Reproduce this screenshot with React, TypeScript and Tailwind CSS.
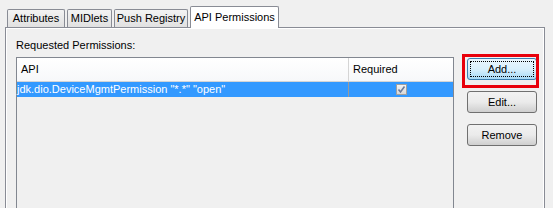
import React from 'react';

const font = { fontFamily: '"Liberation Sans", Arial, sans-serif' };

const Tab: React.FC<{ label: string; w: string; active?: boolean }> = ({ label, w, active }) =>
  active ? (
    <div
      className={`${w} h-[22px] -mb-px z-10 border border-b-0 border-[#898c95] bg-white flex items-center justify-center text-[11px] text-black whitespace-nowrap rounded-t-[2px]`}
    >
      {label}
    </div>
  ) : (
    <div
      className={`${w} h-[18px] mt-[3px] border border-b-0 border-[#898c95] bg-gradient-to-b from-[#f3f3f3] to-[#e1e1e1] flex items-center justify-center text-[11px] text-black whitespace-nowrap rounded-t-[2px]`}
    >
      {label}
    </div>
  );

const Button: React.FC<{ label: string; focused?: boolean }> = ({ label, focused }) => (
  <div
    className={`w-[70px] h-[22px] rounded-[3px] border flex items-center justify-center text-[11px] text-black p-[2px] ${
      focused
        ? 'border-[#3c7fb1] bg-gradient-to-b from-[#eaf6fd] via-[#d9f0fc] to-[#a7d9f5]'
        : 'border-[#707070] bg-gradient-to-b from-[#f2f2f2] via-[#ebebeb] to-[#cfcfcf]'
    }`}
  >
    <div
      className={`w-full h-full flex items-center justify-center ${
        focused ? 'border border-dotted border-black' : ''
      }`}
    >
      {label}
    </div>
  </div>
);

export default function App() {
  return (
    <div style={font} className="relative w-[553px] h-[208px] bg-[#f0f0f0] overflow-hidden">
      {/* tab strip */}
      <div className="flex items-end gap-[2px] pl-[7px] pt-[6px] relative">
        <Tab label="Attributes" w="w-[58px]" />
        <Tab label="MIDlets" w="w-[45px]" />
        <Tab label="Push Registry" w="w-[74px]" />
        <Tab label="API Permissions" w="w-[89px]" active />
      </div>

      {/* panel */}
      <div className="ml-[5px] w-[540px] h-[200px] border border-[#898c95] bg-[#f0f0f0]">
        <div className="h-full border border-white border-b-0 pl-[9px] pt-[10px]">
          <div className="text-[11px] text-black leading-[13px]">Requested Permissions:</div>
          <div className="flex mt-[5px]">
            {/* table */}
            <div className="w-[438px] h-[160px] border border-[#828790] bg-[#f0f0f0]">
              <div className="flex h-[24px] bg-gradient-to-b from-white to-[#f7f8fa] border-b border-[#d5d5d5] text-[11px] text-black">
                <div className="w-[332px] border-r border-[#d5d5d5] flex items-center pl-[4px]">API</div>
                <div className="flex-1 flex items-center pl-[4px]">Required</div>
              </div>
              <div className="flex h-[15px] bg-[#3399ff] text-[11px] text-white">
                <div className="w-[332px] border-r border-[#9a9a9a] flex items-center whitespace-nowrap">
                  jdk.dio.DeviceMgmtPermission "*.*" "open"
                </div>
                <div className="flex-1 flex items-center justify-center">
                  <div className="w-[11px] h-[11px] border border-[#a0a0a0] bg-gradient-to-b from-[#f4f4f4] to-[#d8d8d8] flex items-center justify-center">
                    <svg width="9" height="9" viewBox="0 0 9 9">
                      <path d="M1.5 4.5 L3.5 7 L7.5 1.5" stroke="#6b7a99" strokeWidth="1.6" fill="none" />
                    </svg>
                  </div>
                </div>
              </div>
            </div>

            {/* buttons */}
            <div className="flex flex-col gap-[11px] ml-[13px] mt-px">
              <Button label="Add..." focused />
              <Button label="Edit..." />
              <Button label="Remove" />
            </div>
          </div>
        </div>
      </div>

      {/* red highlight annotation */}
      <div className="absolute left-[462px] top-[54px] w-[77px] h-[34px] border-[3px] border-[#e8000b]" />
    </div>
  );
}
